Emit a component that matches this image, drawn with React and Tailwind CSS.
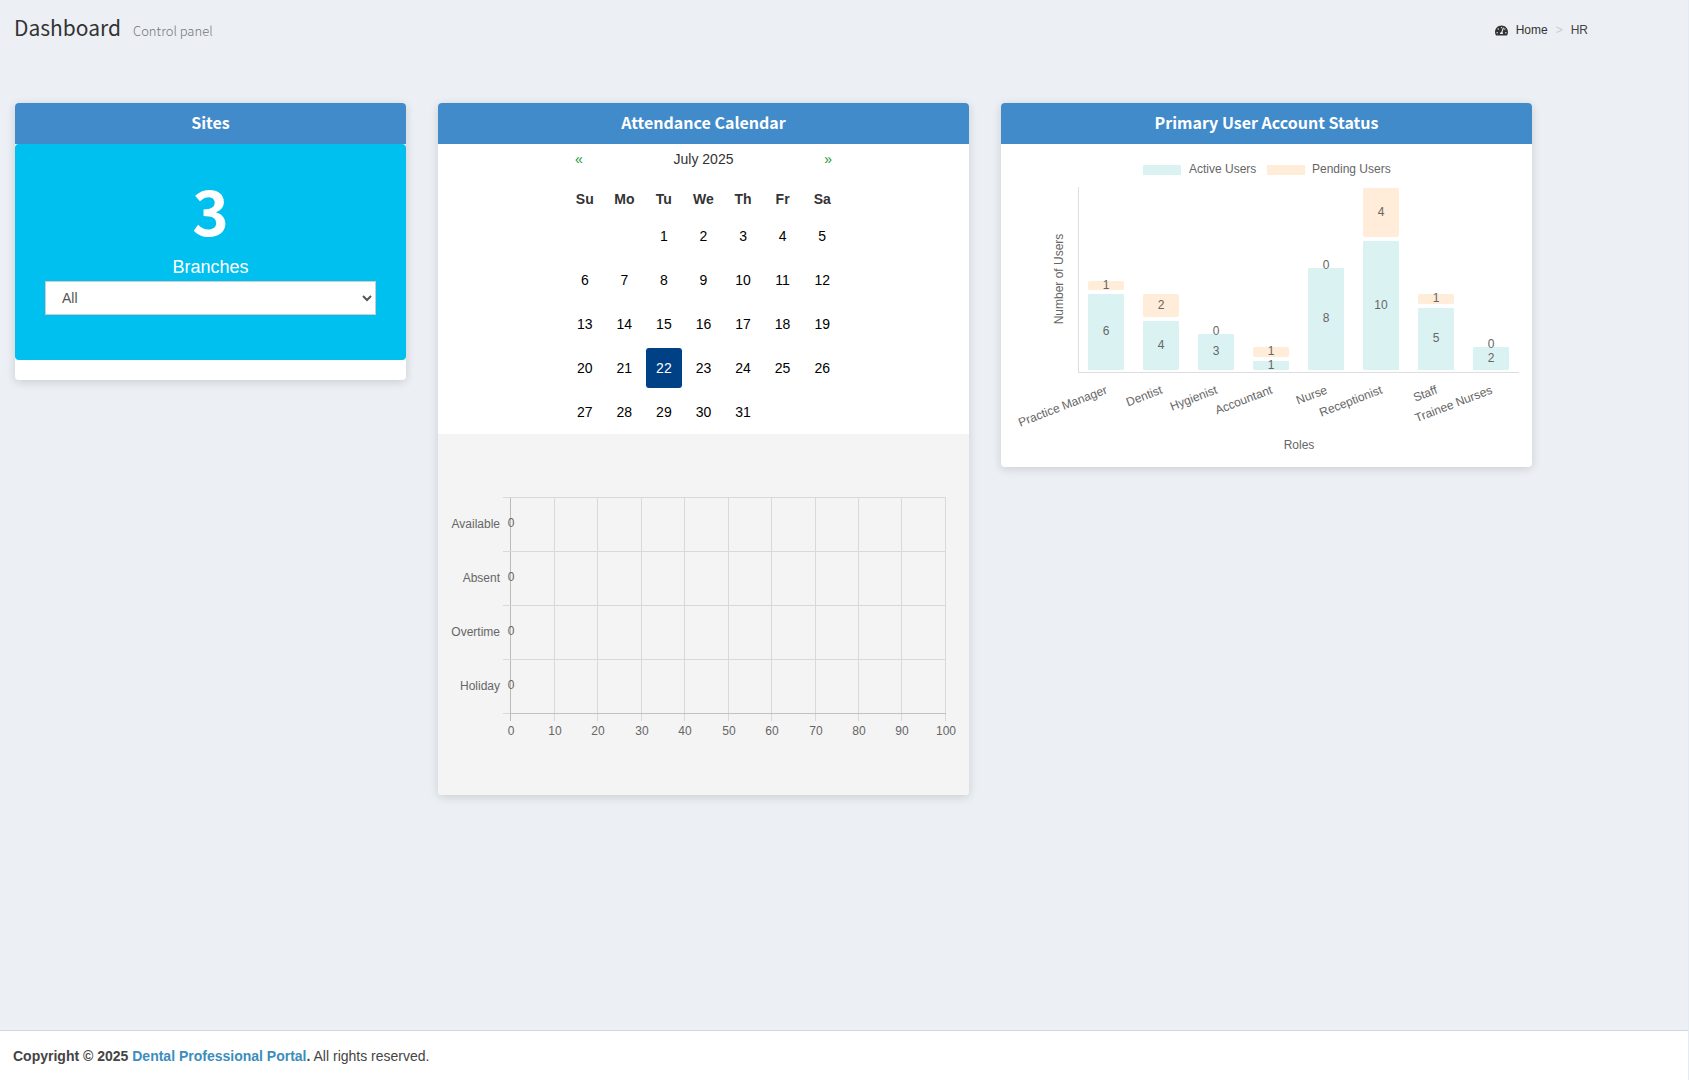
import React, { useState } from 'react';
import { FaTachometerAlt } from 'react-icons/fa';

const roles = [
  { name: 'Practice Manager', active: 6, pending: 1 },
  { name: 'Dentist', active: 4, pending: 2 },
  { name: 'Hygienist', active: 3, pending: 0 },
  { name: 'Accountant', active: 1, pending: 1 },
  { name: 'Nurse', active: 8, pending: 0 },
  { name: 'Receptionist', active: 10, pending: 4 },
  { name: 'Staff', active: 5, pending: 1 },
  { name: 'Trainee Nurses', active: 2, pending: 0 },
];

const attendance = [
  { label: 'Available', value: 0 },
  { label: 'Absent', value: 0 },
  { label: 'Overtime', value: 0 },
  { label: 'Holiday', value: 0 },
];

const weekDays = ['Su', 'Mo', 'Tu', 'We', 'Th', 'Fr', 'Sa'];

// July 2025 starts on a Tuesday
const weeks = [0, 1, 2, 3, 4].map((week) =>
  weekDays.map((_, day) => {
    const date = week * 7 + day - 1;
    return date >= 1 && date <= 31 ? date : null;
  })
);

const Card = ({ title, children }) => (
  <section className="rounded bg-white shadow-[0_2px_10px_rgba(0,0,0,0.15)]">
    <h2 className="rounded-t bg-[#428bca] pt-[7px] pb-[9px] text-center font-['Noto_Sans_CJK_SC',sans-serif] text-base leading-[25px] font-bold text-white">
      {title}
    </h2>
    {children}
  </section>
);

const Sites = () => {
  const [branch, setBranch] = useState('All');

  return (
    <Card title="Sites">
      <div className="rounded bg-[#00c0ef] px-[30px] pt-[25px] pb-[45px] text-center text-white">
        <p className="pb-[5px] font-['Noto_Sans_CJK_SC',sans-serif] text-[62px] leading-20 font-bold">3</p>
        <label htmlFor="branch" className="block text-lg leading-[27px]">
          Branches
        </label>
        <select
          id="branch"
          value={branch}
          onChange={(e) => setBranch(e.target.value)}
          className="block h-[34px] w-full border border-[#ccc] bg-white px-3 text-sm text-[#555]"
        >
          <option>All</option>
        </select>
      </div>
      <div className="h-5" />
    </Card>
  );
};

const Calendar = () => {
  const [selected, setSelected] = useState(22);

  return (
    <div className="mx-auto w-[281px] text-sm">
      <div className="flex justify-between px-3 pt-[5px] pb-3 leading-5">
        <button type="button" aria-label="Previous month" className="text-[#1e9632]">«</button>
        <span className="text-[#333]">July 2025</span>
        <button type="button" aria-label="Next month" className="text-[#1e9632]">»</button>
      </div>
      <table className="w-full table-fixed border-separate border-spacing-1 text-center text-black">
        <thead>
          <tr className="h-[27px] text-[#333]">
            {weekDays.map((day) => (
              <th key={day} className="p-0 font-bold">{day}</th>
            ))}
          </tr>
        </thead>
        <tbody>
          {weeks.map((week, i) => (
            <tr key={i} className="h-10">
              {week.map((date, j) => (
                <td key={j} className="p-0">
                  {date && (
                    <button
                      type="button"
                      onClick={() => setSelected(date)}
                      className={`block h-10 w-full rounded-[3px] ${date === selected ? 'bg-[#004085] text-white' : ''}`}
                    >
                      {date}
                    </button>
                  )}
                </td>
              ))}
            </tr>
          ))}
        </tbody>
      </table>
    </div>
  );
};

const AttendanceChart = () => {
  const left = 72;
  const top = 63;
  const rowHeight = 54;
  const bottom = top + rowHeight * attendance.length;
  const ticks = [0, 10, 20, 30, 40, 50, 60, 70, 80, 90, 100];
  const tickX = (tick) => Math.round(left + tick * 4.35);

  return (
    <svg viewBox="0 0 531 361" className="block w-full" fontSize="12" fill="#666">
      {ticks.map((tick) => (
        <g key={tick}>
          <rect x={tickX(tick)} y={top} width="1" height={bottom - top + 8} fill={tick === 0 ? '#bbb' : '#d9d9d9'} />
          <text x={tickX(tick) + 1} y={bottom + 22} textAnchor="middle">{tick}</text>
        </g>
      ))}
      {[0, 1, 2, 3, 4].map((line) => (
        <rect key={line} x={left - 7} y={top + line * rowHeight} width="443" height="1" fill="#d9d9d9" />
      ))}
      <rect x={left} y={bottom} width="436" height="1" fill="#c2c2c2" />
      {attendance.map((row, i) => (
        <g key={row.label}>
          <text x={left - 10} y={top + i * rowHeight + 31} textAnchor="end">{row.label}</text>
          <text x={left + 1} y={top + i * rowHeight + 30} textAnchor="middle">{row.value}</text>
        </g>
      ))}
    </svg>
  );
};

// Stacked columns, a 4px gap is kept below every segment
const StatusChart = () => {
  const unit = 13.3;
  const base = 230;
  const topOf = (value) => Math.round(base - value * unit);

  return (
    <svg viewBox="0 0 531 323" className="block w-full" fontSize="12" fill="#666">
      <rect x="142" y="21" width="38" height="10" fill="#dbf2f2" />
      <text x="188" y="29">Active Users</text>
      <rect x="266" y="21" width="38" height="10" fill="#ffecd9" />
      <text x="311" y="29">Pending Users</text>

      <rect x="77" y="43" width="1" height="186" fill="#dedede" />
      <rect x="77" y="228" width="441" height="1" fill="#dedede" />

      {roles.map((role, i) => {
        const x = 87 + i * 55;
        const center = x + 18;
        const total = role.active + role.pending;
        const activeTop = topOf(role.active);
        const totalTop = topOf(total);
        return (
          <g key={role.name}>
            <rect x={x} y={activeTop} width="36" height={base - 4 - activeTop} rx="1" fill="#dbf2f2" />
            {role.pending > 0 && (
              <rect x={x} y={totalTop} width="36" height={activeTop - 4 - totalTop} rx="2" fill="#ffecd9" />
            )}
            <text x={center} y={(activeTop + base - 4) / 2 + 3} textAnchor="middle">{role.active}</text>
            <text x={center} y={(totalTop + activeTop - 4) / 2 + 3} textAnchor="middle">{role.pending}</text>
            <text transform={`translate(${center + 2} 249) rotate(-21)`} textAnchor="end">{role.name}</text>
          </g>
        );
      })}

      <text transform="translate(62 135) rotate(-90)" textAnchor="middle">Number of Users</text>
      <text x="298" y="305" textAnchor="middle">Roles</text>
    </svg>
  );
};

const App = () => (
  <div className="flex min-h-screen flex-col border-r border-[#e6ebf2] bg-[#ecf0f5] font-['Liberation_Sans',Arial,sans-serif] text-sm text-[#333]">
    <header className="flex items-start justify-between pt-[13px] pr-[100px] pl-3.5">
      <h1 className="flex items-baseline gap-3 font-['Noto_Sans_CJK_SC',sans-serif] text-[21px] leading-7">
        Dashboard
        <small className="text-[13px] font-light text-[#777]">Control panel</small>
      </h1>
      <nav aria-label="Breadcrumb" className="flex items-center pt-2 text-xs leading-[18px] text-[#444]">
        <a href="#home" className="flex items-center gap-2 text-[#333]">
          <FaTachometerAlt size={13} />
          Home
        </a>
        <span className="px-2 text-[#ccc]">&gt;</span>
        <span>HR</span>
      </nav>
    </header>

    <main className="grid flex-1 grid-cols-[391fr_531fr_531fr] items-start gap-8 pt-[58px] pr-[156px] pb-10 pl-[15px]">
      <Sites />
      <Card title="Attendance Calendar">
        <Calendar />
        <div className="-mt-0.5 rounded-b bg-[#f4f4f4]">
          <AttendanceChart />
        </div>
      </Card>
      <Card title="Primary User Account Status">
        <StatusChart />
      </Card>
    </main>

    <footer className="border-t border-[#d2d6de] bg-white px-[13px] pt-[15px] pb-3.5 leading-5 text-[#444]">
      <strong>
        Copyright © 2025 <a href="#portal" className="text-[#3c8dbc]">Dental Professional Portal</a>.
      </strong>{' '}
      All rights reserved.
    </footer>
  </div>
);

export default App;
